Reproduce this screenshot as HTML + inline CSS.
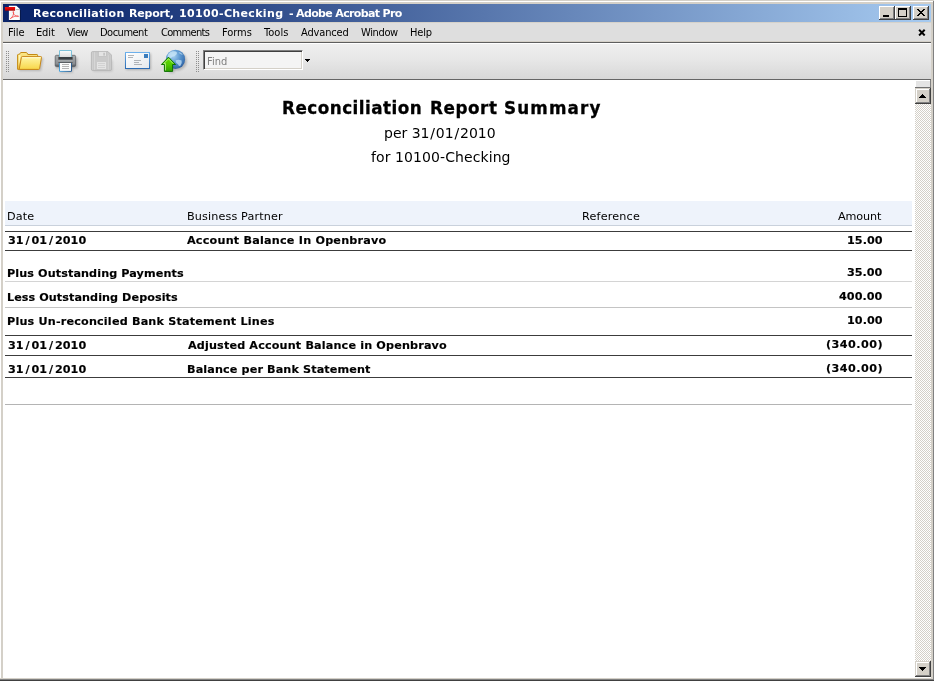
<!DOCTYPE html>
<html>
<head>
<meta charset="utf-8">
<title>Reconciliation Report, 10100-Checking - Adobe Acrobat Pro</title>
<style>
html,body{margin:0;padding:0;}
body{width:934px;height:681px;overflow:hidden;background:#d4d0c8;position:relative;font-family:"DejaVu Sans","Liberation Sans",sans-serif;}
.abs{position:absolute;}
.t{position:absolute;white-space:nowrap;line-height:1;will-change:transform;}
#win{left:0;top:0;width:934px;height:681px;background:#d4d0c8;}
#titlebar{left:3px;top:4px;width:928px;height:18px;background:linear-gradient(to right,#0a246a 0%,#0a246a 4%,#a6caf0 100%);}
.tt{top:8px;color:#fff;font-weight:bold;font-size:11px;font-family:"DejaVu Sans","Liberation Sans",sans-serif;}
#menubar{left:3px;top:22px;width:928px;height:20px;background:#dedede;box-shadow:inset 0 1px 0 #d6d2ca,inset 0 -1px 0 #d4d0c8;}
.mi{top:27px;font-size:11px;color:#000;font-family:"DejaVu Sans Condensed","Liberation Sans",sans-serif;}
#toolbar{left:3px;top:43px;width:928px;height:36px;background:linear-gradient(to bottom,#ffffff 0,#ffffff 1px,#efefef 1px,#e6e6e6 50%,#d8d8d8 100%);}
#doc{left:3px;top:80px;width:912px;height:598px;background:#fff;}
.wb{background:#d4d0c8;box-shadow:inset -1px -1px 0 #404040,inset 1px 1px 0 #fff,inset -2px -2px 0 #808080;}
.sb{background:#d4d0c8;box-shadow:inset -1px -1px 0 #404040,inset 1px 1px 0 #d4d0c8,inset -2px -2px 0 #808080,inset 2px 2px 0 #fff;}
.grip{width:3px;height:21px;background-image:linear-gradient(#8e8e8e,#8e8e8e);background-size:1px 1px;background-repeat:no-repeat;background:conic-gradient(from 0deg at 1px 1px,transparent 0 25%,transparent 25% 50%,transparent 50% 75%,#8e8e8e 75%) 0 0/2px 2px;}
.sb1{margin:0 1.8px}
.sr1{margin:0 0.8px}
.hdr{top:211px;font-size:11.2px;color:#000;}
.row{font-size:11.2px;font-weight:bold;color:#000;-webkit-text-stroke:0.15px #000;}
.ln{position:absolute;left:5px;width:907px;height:1px;}
</style>
</head>
<body>
<div id="win" class="abs">
  <!-- outer frame -->
  <div class="abs" style="left:0;top:1px;width:933px;height:1px;background:#fff"></div>
  <div class="abs" style="left:0px;top:1px;width:1px;height:677px;background:#fff"></div>
  <div class="abs" style="left:933px;top:1px;width:1px;height:680px;background:#808080"></div>
    <div class="abs" style="left:0;top:679px;width:934px;height:1px;background:#808080"></div>
  <div class="abs" style="left:0;top:680px;width:934px;height:1px;background:#404040"></div>

  <div id="titlebar" class="abs"></div>
  <!-- pdf icon -->
  <svg class="abs" style="left:4px;top:4px" width="18" height="18" viewBox="4 4 18 18">
    <defs><linearGradient id="gr1" x1="0" y1="0" x2="0" y2="1"><stop offset="0" stop-color="#f01010"/><stop offset="0.6" stop-color="#d80000"/><stop offset="1" stop-color="#a00000"/></linearGradient></defs>
    <path d="M9.4 20.6 L20.3 20.6 L20.3 10" fill="none" stroke="#000" stroke-width="0.8" opacity="0.45"/>
    <path d="M8.9 5.8 L16.2 5.8 L19.9 9.2 L19.9 20.1 L8.9 20.1 Z" fill="#fcfcfc"/>
    <path d="M16.2 5.8 L16.2 9.2 L19.9 9.2 Z" fill="#ffffff"/>
    <path d="M16 9.6 L19.9 9.6" stroke="#a8a8a8" stroke-width="0.8"/>
    <rect x="10.5" y="11.5" width="8" height="6" fill="#f0f0f0" opacity="0.6"/>
    <rect x="4.9" y="7" width="10.2" height="3.7" fill="url(#gr1)"/>
    <path d="M10.3 18.6 C12.6 17.4 13.9 14.4 13.6 11.9 C13.5 11 12.9 11.4 13.1 12.4 C13.6 14.8 15.6 16.6 18.4 16.5 C19.2 16.2 18.2 15.7 16.8 15.9 C14.2 16.3 12 17.4 10.3 18.6 Z" fill="none" stroke="#f43434" stroke-width="0.75" opacity="0.9"/>
  </svg>
  <div id="t1a" class="t tt" style="left:33.0px;letter-spacing:0.285px;">Reconciliation</div>
  <div id="t1c" class="t tt" style="left:129.0px;letter-spacing:-0.2px;">Report,</div>
  <div id="t1b" class="t tt" style="left:179.25px;letter-spacing:0.346px;">10100-Checking</div>
  <div id="t2" class="t tt" style="left:289.0px;letter-spacing:-0.65px;">- Adobe Acrobat Pro</div>

  <!-- window buttons -->
  <div class="abs wb" style="left:879px;top:6px;width:16px;height:14px"></div>
  <div class="abs" style="left:883px;top:15px;width:6px;height:2px;background:#000"></div>
  <div class="abs wb" style="left:895px;top:6px;width:16px;height:14px"></div>
  <div class="abs" style="left:898px;top:8px;width:9px;height:9px;box-sizing:border-box;border:1px solid #000;border-top-width:2px"></div>
  <div class="abs wb" style="left:913px;top:6px;width:16px;height:14px"></div>
  <svg class="abs" style="left:917px;top:9px" width="8" height="7" viewBox="0 0 8 7" shape-rendering="crispEdges">
    <path d="M0 0h2v1h1v1h2v-1h1v-1h2v1h-1v1h-1v1h-1v1h1v1h1v1h1v1h-2v-1h-1v-1h-2v1h-1v1h-2v-1h1v-1h1v-1h1v-1h-1v-1h-1v-1h-1z" fill="#000"/>
  </svg>

  <div id="menubar" class="abs"></div>
  <div class="t mi" id="m0" style="left:8.25px;letter-spacing:-0.0px;">File</div>
  <div class="t mi" id="m1" style="left:36.25px;letter-spacing:-0.133px;">Edit</div>
  <div class="t mi" id="m2" style="left:67.0px;letter-spacing:-0.683px;">View</div>
  <div class="t mi" id="m3" style="left:100.0px;letter-spacing:-0.5px;">Document</div>
  <div class="t mi" id="m4" style="left:161.0px;letter-spacing:-0.671px;">Comments</div>
  <div class="t mi" id="m5" style="left:221.5px;letter-spacing:-0.05px;">Forms</div>
  <div class="t mi" id="m6" style="left:264.0px;letter-spacing:0.05px;">Tools</div>
  <div class="t mi" id="m7" style="left:301.0px;letter-spacing:-0.15px;">Advanced</div>
  <div class="t mi" id="m8" style="left:361.0px;letter-spacing:-0.36px;">Window</div>
  <div class="t mi" id="m9" style="left:410px;letter-spacing:-0.167px;">Help</div>
  <svg class="abs" style="left:918px;top:29px" width="8" height="7" viewBox="0 0 8 7">
    <path d="M1.1 0.8 L6.7 6.4 M6.7 0.8 L1.1 6.4" stroke="#000" stroke-width="2"/>
  </svg>
  <div class="abs" style="left:3px;top:42px;width:928px;height:1px;background:#5e5e5e"></div>

  <div id="toolbar" class="abs"></div>
  <!-- grips -->
  <div class="abs grip" style="left:6px;top:51px"></div>
  <div class="abs grip" style="left:196px;top:51px"></div>
  <!-- folder -->
  <svg class="abs" style="left:15px;top:49px" width="30" height="24" viewBox="15 49 30 24">
    <defs>
      <linearGradient id="gf1" x1="0" y1="0" x2="0" y2="1"><stop offset="0" stop-color="#fbe88a"/><stop offset="1" stop-color="#eec23c"/></linearGradient>
      <linearGradient id="gf2" x1="0" y1="0" x2="0" y2="1"><stop offset="0" stop-color="#fff6a8"/><stop offset="1" stop-color="#f8d648"/></linearGradient>
      <filter id="sh" x="-20%" y="-20%" width="150%" height="150%"><feGaussianBlur stdDeviation="0.9"/></filter>
    </defs>
    <path d="M19 58 L43.5 58 L41 71 L19 71 Z" fill="#000" opacity="0.18" filter="url(#sh)"/>
    <path d="M17.6 69.3 L17.6 55 Q17.6 54.4 18.2 54.4 L19.4 54.4 L20.3 52.9 Q20.5 52.5 21 52.5 L26.2 52.5 Q26.8 52.5 27 52.9 L27.8 54.5 L36.9 54.5 Q37.6 54.5 37.6 55.2 L37.6 69.3 Z" fill="url(#gf1)" stroke="#c48a14" stroke-width="1"/>
    <path d="M18.7 54.6 L18.7 66 L20.6 57 L20.6 55.6 Z" fill="#fffbc8" opacity="0.8"/>
    <path d="M19.2 69.4 L21.4 57.3 Q21.5 56.6 22.2 56.6 L40.8 56.6 Q41.7 56.6 41.5 57.4 L39.6 68.6 Q39.5 69.4 38.6 69.4 Z" fill="url(#gf2)" stroke="#c8861a" stroke-width="1"/>
    <path d="M22.3 57.7 L40.6 57.7" stroke="#fffde0" stroke-width="0.9" opacity="0.9"/>
  </svg>
  <!-- printer -->
  <svg class="abs" style="left:52px;top:47px" width="28" height="28" viewBox="52 47 28 28">
    <defs>
      <linearGradient id="gp1" x1="0" y1="0" x2="0" y2="1"><stop offset="0" stop-color="#ffffff"/><stop offset="1" stop-color="#dcdcdc"/></linearGradient>
      <linearGradient id="gp3" x1="0" y1="0" x2="0" y2="1"><stop offset="0" stop-color="#a8acae"/><stop offset="0.75" stop-color="#8a8e92"/><stop offset="1" stop-color="#4c5054"/></linearGradient>
      <linearGradient id="gp4" x1="0" y1="0" x2="1" y2="0"><stop offset="0" stop-color="#4aa0d8"/><stop offset="1" stop-color="#2c5c8c"/></linearGradient>
    </defs>
    <rect x="56" y="57.5" width="21.5" height="11" fill="#000" opacity="0.22" filter="url(#sh)"/>
    <rect x="60" y="65" width="13" height="8" fill="#000" opacity="0.15" filter="url(#sh)"/>
    <rect x="55.2" y="55.3" width="20.4" height="11.3" rx="1.3" fill="url(#gp3)" stroke="#54585c" stroke-width="0.7"/>
    <rect x="58.4" y="56.8" width="14.2" height="3" fill="#3a3e42"/>
    <rect x="58.4" y="59.8" width="14.2" height="2.1" fill="#a2a6a8"/>
    <rect x="58.4" y="61.9" width="14.2" height="1.3" fill="#5a5e62"/>
    <rect x="59" y="50" width="13" height="7" fill="url(#gp1)"/><path d="M59.5 57 L59.5 50.5 L71.5 50.5 L71.5 57" fill="none" stroke="#7cc0d8" stroke-width="1"/>
    <rect x="59" y="63" width="13" height="8.8" fill="#fbfbfb"/><path d="M59.5 63 L59.5 71.4 L71.5 71.4 L71.5 63" fill="none" stroke="url(#gp4)" stroke-width="1"/>
    <path d="M62 64.5h7M62 66.5h7M62 68.5h7" stroke="#b4b4b4" stroke-width="1"/>
  </svg>
  <!-- floppy (disabled) -->
  <svg class="abs" style="left:88px;top:48px" width="27" height="26" viewBox="88 48 27 26">
    <rect x="93" y="60" width="19.5" height="11.5" fill="#000" opacity="0.13" filter="url(#sh)"/>
    <path d="M92.6 51.6 L108 51.6 L111.4 55 L111.4 69.2 Q111.4 70.4 110.2 70.4 L92.6 70.4 Q91.4 70.4 91.4 69.2 L91.4 52.8 Q91.4 51.6 92.6 51.6 Z" fill="#cacaca" stroke="#b2b2b2" stroke-width="0.8"/>
    <rect x="92.6" y="52.2" width="2.4" height="17.6" fill="#d6d6d6"/>
    <rect x="108" y="55" width="2.4" height="14.8" fill="#d2d2d2"/>
    <path d="M93.5 52v18M109.5 55v15" stroke="#c2c2c2" stroke-width="0.7"/>
    <rect x="98.3" y="51.6" width="8.2" height="5" fill="#e4e4e4" stroke="#bcbcbc" stroke-width="0.7"/>
    <rect x="103.3" y="52.8" width="1.6" height="2.8" fill="#c0c0c0"/>
    <rect x="97" y="62" width="9" height="7" fill="#e4e4e4"/>
    <path d="M98 63.5h7M98 65.5h7M98 67.5h7" stroke="#d2d2d2" stroke-width="1"/>
  </svg>
  <!-- envelope -->
  <svg class="abs" style="left:122px;top:49px" width="32" height="24" viewBox="122 49 32 24">
    <defs>
      <linearGradient id="ge1" x1="0" y1="0" x2="1" y2="1"><stop offset="0" stop-color="#ffffff"/><stop offset="1" stop-color="#e4e8ec"/></linearGradient>
      <linearGradient id="ge2" x1="0" y1="0" x2="0" y2="1"><stop offset="0" stop-color="#6cb0ec"/><stop offset="1" stop-color="#2c6cb4"/></linearGradient>
    </defs>
    <rect x="126" y="53.5" width="25" height="16.5" fill="#000" opacity="0.22" filter="url(#sh)"/>
    <rect x="125.5" y="52.5" width="24" height="16" fill="url(#ge1)" stroke="url(#ge2)" stroke-width="1"/>
    <rect x="144" y="54" width="4" height="4" fill="#3a7cbc"/>
    <path d="M128 55.5h6M128 57.5h5M134 60.5h7M134 62.5h5M134 64.5h8" stroke="#b0b4b8" stroke-width="1"/>
  </svg>
  <!-- globe + arrow -->
  <svg class="abs" style="left:158px;top:47px" width="32" height="28" viewBox="158 47 32 28">
    <defs>
      <radialGradient id="gg1" cx="0.38" cy="0.32" r="0.72"><stop offset="0" stop-color="#a8d2f2"/><stop offset="0.5" stop-color="#5c98d0"/><stop offset="0.85" stop-color="#3c74b4"/><stop offset="1" stop-color="#2c5c9c"/></radialGradient>
      <linearGradient id="gg2" x1="0" y1="0" x2="0" y2="1"><stop offset="0" stop-color="#64e000"/><stop offset="0.55" stop-color="#50c800"/><stop offset="1" stop-color="#30a000"/></linearGradient>
    </defs>
    <ellipse cx="177" cy="61" rx="10" ry="9.5" fill="#000" opacity="0.2" filter="url(#sh)"/>
    <circle cx="175.5" cy="59.4" r="9.6" fill="url(#gg1)"/>
    <path d="M167.5 56.5 Q168 52.5 172.5 51.3 Q175.5 50.8 176.8 52.2 Q177.5 54 175.6 55.2 Q174.6 56.6 172.6 56.4 Q171.5 58.2 169.5 58 Q168 57.8 167.5 56.5 Z" fill="#c8e6f8" opacity="0.8"/>
    <path d="M178.5 52 Q181 52.2 182.8 54.6 Q181.6 55 180.4 54 Q179 53.4 178.5 52 Z" fill="#d4ecfa" opacity="0.6"/>
    <path d="M175.5 60.4 Q178.5 58.8 181.6 60.6 Q182.4 63.4 180.4 65.8 Q178.6 66.6 178 64.2 Q175.6 62.8 175.5 60.4 Z" fill="#bcdcf4" opacity="0.8"/>
    <path d="M163 66 L169 66 L169 73.2 L174.5 73.2 L174.5 66 L177 66" fill="#000" opacity="0.15" filter="url(#sh)"/>
    <path d="M168.5 57.2 L175.6 64.5 L172.6 64.5 L172.6 71.4 L164.4 71.4 L164.4 64.5 L161.4 64.5 Z" fill="url(#gg2)" stroke="#0c7000" stroke-width="1" stroke-linejoin="miter"/>
    <path d="M165.5 70.4 L165.5 63.6 L163.8 63.6 L168.5 58.8 L173.2 63.6" fill="none" stroke="#d8fcb0" stroke-width="0.8" opacity="0.85"/>
  </svg>
  <!-- find box -->
  <div class="abs" style="left:203px;top:50px;width:100px;height:20px;background:#f4f4f4;box-sizing:border-box;border-top:1px solid #808080;border-left:1px solid #808080;border-right:1px solid #fff;border-bottom:1px solid #fff;box-shadow:inset 1px 1px 0 #404040,inset -1px -1px 0 #d4d0c8"></div>
  <div class="t" id="find" style="left:207px;top:56px;font-size:11px;color:#808080;font-family:'DejaVu Sans Condensed','Liberation Sans',sans-serif">Find</div>
  <svg class="abs" style="left:305px;top:59px" width="5" height="3" viewBox="0 0 5 3" shape-rendering="crispEdges"><path d="M0 0h5v1h-1v1h-1v1h-1v-1h-1v-1h-1z" fill="#000"/></svg>
  <div class="abs" style="left:3px;top:79px;width:928px;height:1px;background:#666"></div>

  <div id="doc" class="abs"></div>
  <!-- document content -->
  <div class="t" id="d_t1" style="left:282.25px;letter-spacing:0.481px;top:100px;font-size:16.8px;font-weight:bold;-webkit-text-stroke:0.3px #000;">Reconciliation</div>
  <div class="t" id="d_t2" style="left:430.25px;letter-spacing:0.56px;top:100px;font-size:16.8px;font-weight:bold;-webkit-text-stroke:0.3px #000;">Report</div>
  <div class="t" id="d_t3" style="left:504.0px;letter-spacing:1.133px;top:100px;font-size:16.8px;font-weight:bold;-webkit-text-stroke:0.3px #000;">Summary</div>
  <div class="t" id="d_per" style="left:384.0px;letter-spacing:-0.0px;top:126px;font-size:14px;">per 31<span class="sr1">/</span>01<span class="sr1">/</span>2010</div>
  <div class="t" id="d_for" style="left:371.0px;letter-spacing:0.088px;top:150px;font-size:14px;">for 10100-Checking</div>

  <div class="abs" style="left:5px;top:201px;width:907px;height:24px;background:#eef3fb"></div>
  <div class="ln" style="top:225px;background:#c9d1dc"></div>
  <div class="t hdr" id="h0" style="left:6.5px;letter-spacing:0.167px;">Date</div>
  <div class="t hdr" id="h1" style="left:187.0px;letter-spacing:0.133px;">Business Partner</div>
  <div class="t hdr" id="h2" style="left:582.25px;letter-spacing:0.187px;">Reference</div>
  <div class="t hdr" id="h3" style="left:838.25px;letter-spacing:-0.12px;">Amount</div>

  <div class="ln" style="top:231px;background:#3c3c3c"></div>
  <div class="t row" id="r0a" style="left:7.5px;letter-spacing:0.056px;top:235px">31<span class="sb1">/</span>01<span class="sb1">/</span>2010</div>
  <div class="t row" id="r0b" style="left:187.0px;letter-spacing:0.215px;top:235px">Account Balance In Openbravo</div>
  <div class="t row" id="r0c" style="left:846.5px;letter-spacing:0.05px;top:235px">15.00</div>
  <div class="ln" style="top:250px;background:#3c3c3c"></div>

  <div class="t row" id="r1a" style="left:7px;letter-spacing:0.1px;top:268px">Plus Outstanding Payments</div>
  <div class="t row" id="r1c" style="left:846.75px;letter-spacing:-0.0px;top:267px">35.00</div>
  <div class="ln" style="top:281px;background:#d4d4d4"></div>

  <div class="t row" id="r2a" style="left:7.0px;letter-spacing:0.067px;top:292px">Less Outstanding Deposits</div>
  <div class="t row" id="r2c" style="left:838.5px;letter-spacing:0.04px;top:291px">400.00</div>
  <div class="ln" style="top:307px;background:#c4c4c4"></div>

  <div class="t row" id="r3a" style="left:7.0px;letter-spacing:0.184px;top:316px">Plus Un-reconciled Bank Statement Lines</div>
  <div class="t row" id="r3c" style="left:846.5px;letter-spacing:0.05px;top:315px">10.00</div>
  <div class="ln" style="top:335px;background:#3c3c3c"></div>

  <div class="t row" id="r4a" style="left:7.5px;letter-spacing:0.056px;top:340px">31<span class="sb1">/</span>01<span class="sb1">/</span>2010</div>
  <div class="t row" id="r4b" style="left:187.75px;letter-spacing:0.156px;top:340px">Adjusted Account Balance in Openbravo</div>
  <div class="t row" id="r4c" style="left:826.0px;letter-spacing:0.457px;top:339px">(340.00)</div>
  <div class="ln" style="top:355px;background:#3c3c3c"></div>

  <div class="t row" id="r5a" style="left:7.5px;letter-spacing:0.056px;top:364px">31<span class="sb1">/</span>01<span class="sb1">/</span>2010</div>
  <div class="t row" id="r5b" style="left:186.75px;letter-spacing:0.124px;top:364px">Balance per Bank Statement</div>
  <div class="t row" id="r5c" style="left:826.0px;letter-spacing:0.457px;top:363px">(340.00)</div>
  <div class="ln" style="top:377px;background:#3c3c3c"></div>

  <div class="ln" style="top:404px;background:#b4b4b4"></div>

  <!-- scrollbar -->
  <div class="abs" style="left:915px;top:80px;width:16px;height:598px;background:#fff"></div>
  <div class="abs" id="track" style="left:915px;top:104px;width:16px;height:557px;background-color:#fff;background-image:linear-gradient(45deg,#d4d0c8 25%,transparent 25%,transparent 75%,#d4d0c8 75%),linear-gradient(45deg,#d4d0c8 25%,transparent 25%,transparent 75%,#d4d0c8 75%);background-size:2px 2px;background-position:0 0,1px 1px"></div>
  <div class="abs" style="left:916px;top:81px;width:14px;height:6px;background:#e4e4e4"></div>
  <div class="abs" style="left:930px;top:80px;width:1px;height:8px;background:#808080"></div>
  <div class="abs" style="left:915px;top:87px;width:16px;height:1px;background:#707070"></div>
  <div class="abs sb" style="left:915px;top:88px;width:16px;height:16px"></div>
  <svg class="abs" style="left:919px;top:94px" width="7" height="4" viewBox="0 0 7 4" shape-rendering="crispEdges"><path d="M3 0h1v1h1v1h1v1h1v1h-7v-1h1v-1h1v-1h1z" fill="#000"/></svg>
  <div class="abs sb" style="left:915px;top:661px;width:16px;height:16px"></div>
  <svg class="abs" style="left:919px;top:667px" width="7" height="4" viewBox="0 0 7 4" shape-rendering="crispEdges"><path d="M0 0h7v1h-1v1h-1v1h-1v1h-1v-1h-1v-1h-1v-1h-1z" fill="#000"/></svg>
</div>
</body>
</html>
